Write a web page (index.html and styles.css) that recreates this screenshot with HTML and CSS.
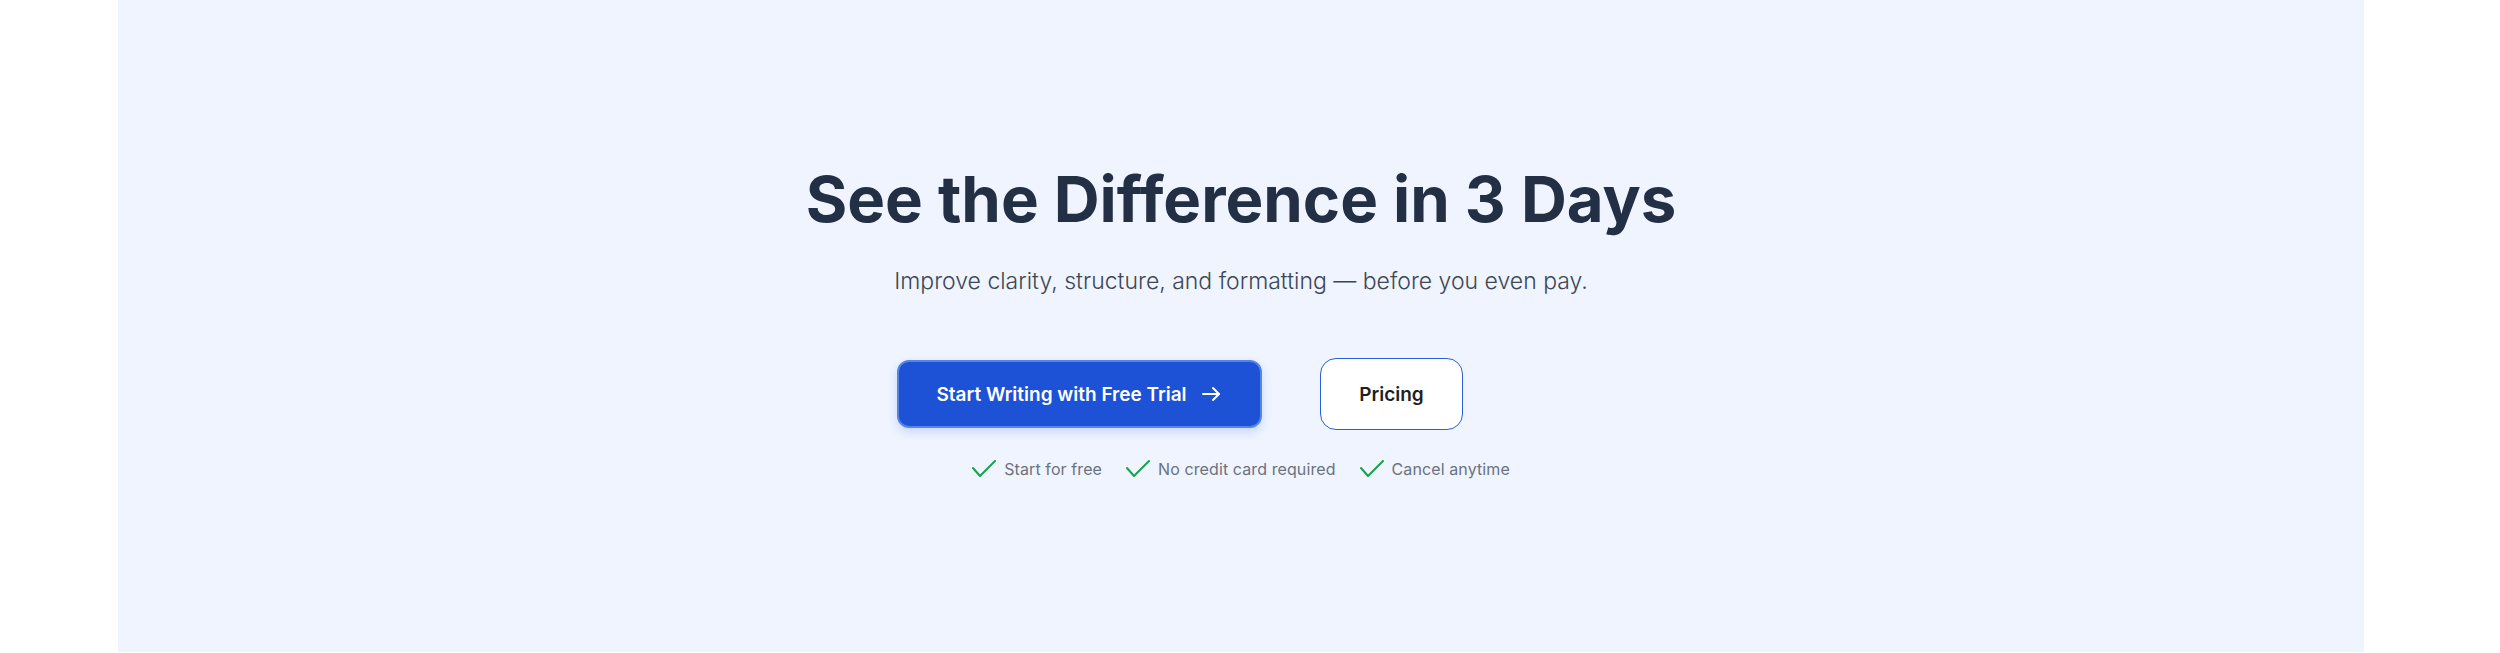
FILE: index.html
```html
<!DOCTYPE html>
<html lang="en">
<head>
<meta charset="utf-8">
<title>See the Difference in 3 Days</title>
<link rel="stylesheet" href="styles.css">
</head>
<body>
<section class="hero">
  <h1 class="hero-title">See the Difference in 3 Days</h1>
  <p class="hero-sub">Improve clarity, structure, and formatting — before you even pay.</p>
  <div class="cta-row">
    <a class="btn btn-primary" href="#">
      <span>Start Writing with Free Trial</span>
      <svg class="arrow" width="24" height="24" viewBox="0 0 24 24" fill="none" stroke="currentColor" stroke-width="2" stroke-linecap="round" stroke-linejoin="round"><path d="M4 12h16"/><path d="M14 6l6 6-6 6"/></svg>
    </a>
    <a class="btn btn-outline" href="#">Pricing</a>
  </div>
  <ul class="perks">
    <li class="perk"><svg class="check" width="24" height="18" viewBox="0 0 24 18" fill="none" stroke="currentColor" stroke-width="2" stroke-linecap="round" stroke-linejoin="round"><path d="M1 8l7 8L23 1"/></svg><span>Start for free</span></li>
    <li class="perk"><svg class="check" width="24" height="18" viewBox="0 0 24 18" fill="none" stroke="currentColor" stroke-width="2" stroke-linecap="round" stroke-linejoin="round"><path d="M1 8l7 8L23 1"/></svg><span>No credit card required</span></li>
    <li class="perk"><svg class="check" width="24" height="18" viewBox="0 0 24 18" fill="none" stroke="currentColor" stroke-width="2" stroke-linecap="round" stroke-linejoin="round"><path d="M1 8l7 8L23 1"/></svg><span>Cancel anytime</span></li>
  </ul>
</section>
</body>
</html>
```

FILE: styles.css
```css
* { box-sizing: border-box; }
html, body { margin: 0; padding: 0; background: #ffffff; }
body { font-family: Inter, "Noto Sans", sans-serif; }

.hero {
  margin: 0 136px 1px 118px;
  height: 652px;
  background: #eff4ff;
  display: flex;
  flex-direction: column;
  align-items: center;
  padding-top: 167px;
}

.hero-title {
  margin: 0;
  font-size: 63.5px;
  line-height: 64px;
  font-weight: 700;
  color: #222f44;
  letter-spacing: 0;
  font-variant-ligatures: none;
}

.hero-sub {
  margin: 34px 0 0;
  font-size: 23px;
  line-height: 32px;
  font-weight: 300;
  color: #3d4756;
}

.cta-row {
  margin-top: 61px;
  display: flex;
  align-items: center;
  gap: 58px;
  padding-right: 122px;
}

.btn {
  display: inline-flex;
  align-items: center;
  justify-content: center;
  text-decoration: none;
  font-size: 19px;
  font-weight: 600;
}

.btn-primary {
  width: 365px;
  height: 68px;
  gap: 12px;
  color: #ffffff;
  background: #1d52d6;
  border: 2px solid #5584ea;
  border-radius: 12px;
  box-shadow: 0 4px 10px rgba(29, 78, 216, 0.18);
}

.btn-outline {
  width: 143px;
  height: 72px;
  color: #1f1f1f;
  background: #ffffff;
  border: 1.5px solid #2a5fdb;
  border-radius: 16px;
}

.arrow { display: block; }

.perks {
  list-style: none;
  margin: 27px 0 0;
  padding: 0;
  display: flex;
  gap: 24px;
}

.perk {
  display: flex;
  align-items: center;
  gap: 8px;
  font-size: 16px;
  line-height: 24px;
  letter-spacing: 0.1px;
  color: #6b7280;
}

.check { color: #16a34a; display: block; }
```
